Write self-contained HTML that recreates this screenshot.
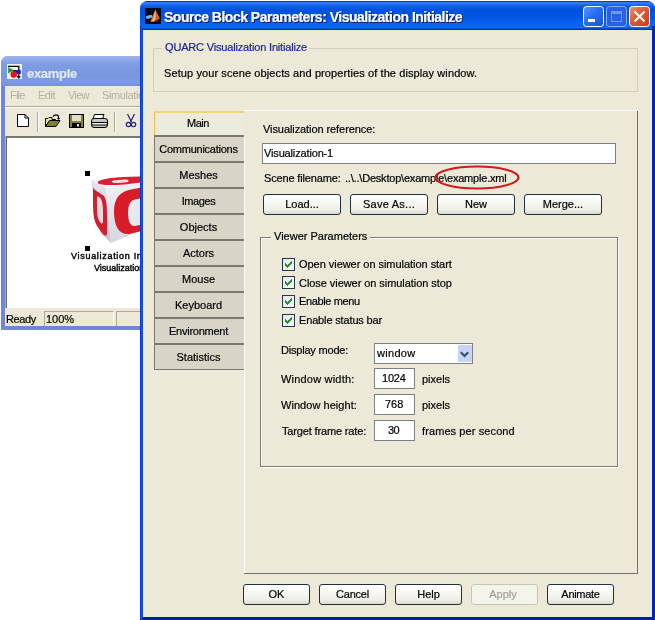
<!DOCTYPE html>
<html><head><meta charset="utf-8">
<style>
html,body{margin:0;padding:0;}
body{will-change:transform;-webkit-text-stroke-width:0.2px;width:655px;height:620px;position:relative;overflow:hidden;background:#fff;font-family:"Liberation Sans",sans-serif;font-size:11px;color:#000;}
.a{position:absolute;}
.t{position:absolute;white-space:pre;line-height:13px;font-size:11px;}
svg{position:absolute;overflow:visible;}
/* background window */
#bgw{left:1px;top:56px;width:150px;height:274px;background:#7286d8;border-radius:7px 7px 0 0;}
#bgtitle{left:1px;top:56px;width:150px;height:30px;border-radius:7px 7px 0 0;background:linear-gradient(#a0b6ee 0px,#92aaea 3px,#809de2 8px,#7896de 20px,#7f9ce2 26px,#7490dc 30px);}
#bgmenu{left:5px;top:86px;width:140px;height:20px;background:#ece9d8;}
#bgsep{left:5px;top:106px;width:140px;height:1px;background:#aca899;}
#bgtool{left:5px;top:107px;width:140px;height:29px;background:#ece9d8;border-top:1px solid #fff;}
#bgcanvas{left:6px;top:136px;width:139px;height:170px;background:#fff;border-left:1px solid #646a64;border-top:2px solid #7a786e;}
#bgstatus{left:5px;top:308px;width:140px;height:18px;background:#ece9d8;}
.menu{color:#b4b1a2;-webkit-text-stroke-width:0;}
/* dialog */
#dlg{left:140px;top:1px;width:515px;height:619px;background:#0a2ab8;border-radius:8px 8px 0 0;}
#dtitle{left:140px;top:1px;width:515px;height:29px;border-radius:8px 8px 0 0;background:linear-gradient(#0a3aa8 0px,#0a3aa8 1px,#3a80f2 1px,#2a74f0 3px,#0c5ce8 5px,#0052dc 9px,#0055e2 16px,#0862f4 22px,#0a68fa 27px,#0038b8 28px,#0030b0 29px);}
#dclient{left:143px;top:30px;width:509px;height:587px;background:#ece9d8;}
.btn{position:absolute;box-sizing:border-box;height:21px;border:1px solid #1f3040;border-radius:3px;background:linear-gradient(#ffffff 0%,#f8f8f5 35%,#eeede6 80%,#dcd8cc 100%);}
.btn span{position:absolute;left:0;right:0;top:3px;text-align:center;line-height:13px;white-space:pre;}
.inp{position:absolute;box-sizing:border-box;border:1px solid #7e817f;background:#fff;}
.tab{position:absolute;left:154px;width:90px;height:26px;box-sizing:border-box;background:#d8d4c8;border-left:1px solid #7b786c;border-top:2px solid #7b786c;}
.tab span{position:absolute;left:0;right:2px;top:6px;text-align:center;line-height:13px;white-space:pre;}
</style></head><body>

<!-- ============ background window ============ -->
<div class="a" id="bgw"></div>
<div class="a" id="bgtitle"></div>
<svg style="left:7px;top:64px" width="16" height="16" viewBox="0 0 16 16">
  <rect x="0" y="0" width="15" height="15" fill="#eef0ea"/>
  <path d="M1 2.3 L11.8 2.3 L11.8 6" fill="none" stroke="#000" stroke-width="1.3"/>
  <path d="M1.2 3.2 L7 6.2 L1.2 9.4 Z" fill="#1a9a2a"/>
  <rect x="5.8" y="6" width="8" height="4" fill="#1c1cc8"/>
  <circle cx="6.8" cy="10.6" r="3.3" fill="#e01818"/>
  <path d="M11.8 10 L11.8 13.8 M10.3 12.3 L11.8 13.8 L13.3 12.3" fill="none" stroke="#000" stroke-width="1.2"/>
</svg>
<div class="t" style="left:27px;top:66px;font-size:13px;line-height:15px;font-weight:bold;color:#dfe8fa;letter-spacing:-0.3px;">example</div>
<div class="a" id="bgmenu"></div>
<div class="t menu" style="left:10px;top:89px;letter-spacing:-0.8px;">File</div>
<div class="t menu" style="left:38px;top:89px;letter-spacing:-0.5px;">Edit</div>
<div class="t menu" style="left:68px;top:89px;letter-spacing:-0.7px;">View</div>
<div class="t menu" style="left:102px;top:89px;letter-spacing:-0.4px;">Simulation</div>
<div class="a" id="bgsep"></div>
<div class="a" id="bgtool"></div>
<!-- toolbar icons -->
<svg style="left:0;top:0" width="145" height="140">
  <!-- new doc -->
  <path d="M17.5 114.5 H25 L28.5 118 V126.5 H17.5 Z" fill="#fff" stroke="#000" stroke-width="1"/>
  <path d="M25 114.5 V118 H28.5" fill="none" stroke="#000" stroke-width="1"/>
  <!-- separator -->
  <rect x="37" y="112" width="1" height="20" fill="#aca899"/><rect x="38" y="112" width="1" height="20" fill="#fff"/>
  <!-- open folder -->
  <path d="M45.5 118.5 H48 L49 117.5 H52 V119.5 H55.5 V121 H50 L45.5 126.5 Z" fill="#e8e890" stroke="#000" stroke-width="1"/>
  <path d="M45.5 126.5 L49.5 120.5 H60 L56 126.5 Z" fill="#808030" stroke="#000" stroke-width="1"/>
  <path d="M53 116.5 Q55.5 113.5 58.5 116 L58.5 119" fill="none" stroke="#000" stroke-width="1.2"/>
  <path d="M57 118 L58.5 120 L60 118 Z" fill="#000"/>
  <!-- floppy -->
  <rect x="69.5" y="114.5" width="14" height="13" fill="#808040" stroke="#000" stroke-width="1"/>
  <rect x="72" y="115" width="9" height="6" fill="#e0e0c8"/>
  <rect x="72" y="123" width="9" height="4.5" fill="#000"/>
  <rect x="77" y="124" width="2" height="2.5" fill="#e0e0c8"/>
  <!-- printer -->
  <path d="M94.5 114.5 H104 L102.5 119 H93 Z" fill="#fff" stroke="#000" stroke-width="1"/>
  <path d="M91.5 121 Q91.5 118.5 94 118.5 H105 Q107.5 118.5 107.5 121 V125 Q107.5 127.5 105 127.5 H94 Q91.5 127.5 91.5 125 Z" fill="#c8c8c0" stroke="#000" stroke-width="1"/>
  <path d="M92 122.5 H107 M92 125 H107" stroke="#000" stroke-width="1"/>
  <path d="M93 123.7 H106" stroke="#fff" stroke-width="1"/>
  <!-- separator -->
  <rect x="114" y="112" width="1" height="20" fill="#aca899"/><rect x="115" y="112" width="1" height="20" fill="#fff"/>
  <!-- scissors -->
  <path d="M127.5 114 L131.5 122 M134.5 114 L130.5 122" stroke="#20207a" stroke-width="1.2" fill="none"/>
  <circle cx="128.5" cy="124.5" r="2.2" fill="none" stroke="#20207a" stroke-width="1.2"/>
  <circle cx="133.5" cy="124.5" r="2.2" fill="none" stroke="#20207a" stroke-width="1.2"/>
</svg>
<div class="a" style="left:5px;top:136px;width:1px;height:172px;background:#a4acd6;"></div><div class="a" id="bgcanvas"></div>
<!-- cube block -->
<svg style="left:0;top:0" width="145" height="300">
  <rect x="85" y="171" width="5" height="5" fill="#000"/>
  <rect x="85" y="246" width="5" height="5" fill="#000"/>
  <!-- faces -->
  <defs><linearGradient id="ff" x1="0" y1="0" x2="0" y2="1"><stop offset="0" stop-color="#f2f2f6"/><stop offset="1" stop-color="#d6d6de"/></linearGradient>
  <linearGradient id="lf" x1="0" y1="0" x2="0" y2="1"><stop offset="0" stop-color="#e4e4ea"/><stop offset="1" stop-color="#c4c4cc"/></linearGradient></defs>
  <polygon points="91,180 106,188 111,243 100,232" fill="url(#lf)"/>
  <polygon points="106,188 142,181 142,230 111,243" fill="url(#ff)"/>
  <polygon points="91,180 142,175 142,181 106,188" fill="#f4f4f8"/>
  <!-- left letter -->
  <path d="M93 188 Q92 186 95 190 L104 196 Q107 200 107 215 L107 234 Q106 238 102 233 L97 226 Q93 220 93 205 Z" fill="#d02030"/>
  <path d="M97 197 Q98 195 101 199 Q103 203 103 212 L103 222 Q102 225 100 222 Q97 218 97 210 Z" fill="#f0d8dc"/>
  <!-- front letter -->
  <path d="M142 187.5 L131 189.5 Q114 192.5 114 211 Q114 235 129 234 L142 231 Z" fill="#d81c28"/>
  <path d="M142 198 L135 199.5 Q128 201 128 212 Q128 226.5 135 226 L142 224.5 Z" fill="#e8e8f0"/>
  <!-- top letter -->
  <path d="M98 181.5 Q103 178 124 177 L141 176.5 L141 182.5 Q120 185.5 106 185 Q96 184.5 98 181.5 Z" fill="#d82030"/>
  <path d="M112 181 Q115 179.5 126 179.5 Q130 180 128 182 Q120 183.3 114 183 Q111 182 112 181 Z" fill="#f4e0e4"/>
</svg>
<div class="t" style="left:71px;top:251px;font-size:9px;line-height:11px;letter-spacing:0.7px;-webkit-text-stroke-width:0.4px;">Visualization Initialize</div>
<div class="t" style="left:94px;top:263px;font-size:9px;line-height:11px;-webkit-text-stroke-width:0.4px;">Visualization</div>
<div class="a" id="bgstatus"></div>
<div class="a" style="left:44px;top:311px;width:70px;height:15px;box-sizing:border-box;border-top:1px solid #aca899;border-left:1px solid #aca899;border-right:1px solid #fff;"></div>
<div class="a" style="left:116px;top:311px;width:40px;height:15px;box-sizing:border-box;border-top:1px solid #aca899;border-left:1px solid #aca899;"></div>
<div class="t" style="left:6px;top:313px;letter-spacing:-0.4px;">Ready</div>
<div class="t" style="left:46px;top:313px;">100%</div>

<!-- ============ dialog ============ -->
<div class="a" id="dlg"></div>
<div class="a" id="dtitle"></div>
<div class="a" style="left:140px;top:26px;width:1px;height:594px;background:#0a36c4;"></div><div class="a" style="left:141px;top:26px;width:1px;height:594px;background:#1e56e6;"></div><div class="a" style="left:142px;top:30px;width:1px;height:587px;background:#0c46d8;"></div><div class="a" style="left:652px;top:26px;width:3px;height:594px;background:#0424b0;"></div><div class="a" style="left:143px;top:617px;width:512px;height:3px;background:#021e98;"></div>
<div class="a" id="dclient"></div>
<!-- matlab icon -->
<svg style="left:145px;top:8px" width="16" height="16" viewBox="0 0 16 16">
  <rect width="16" height="16" fill="#030a1e"/>
  <ellipse cx="4.2" cy="8.8" rx="3.4" ry="1.7" transform="rotate(-12 4.2 8.8)" fill="#78b8e0"/>
  <path d="M5.2 13.8 Q7.5 8.5 10.3 1.2 Q12.5 6 14.8 10.6 Q12.5 12.2 10 13.2 Q7 14.6 5.2 13.8 Z" fill="#d8662a"/>
  <path d="M6.8 13.4 Q9 7.5 10.4 2.2 Q11.4 7 10 12.2 Z" fill="#ffb27a"/>
  <path d="M10.2 12.8 Q12.5 11.2 14.8 10.6 Q13.5 13.6 11 14.2 Z" fill="#7a1a10"/>
</svg>
<div class="t" style="left:165px;top:11px;font-size:14px;line-height:15px;font-weight:bold;color:#0a1a70;letter-spacing:-0.5px;">Source Block Parameters: Visualization Initialize</div>
<div class="t" style="left:164px;top:10px;font-size:14px;line-height:15px;font-weight:bold;color:#fff;letter-spacing:-0.5px;">Source Block Parameters: Visualization Initialize</div>
<!-- title buttons -->
<svg style="left:0;top:0" width="655" height="30">
  <defs>
    <linearGradient id="gb" x1="0" y1="0" x2="1" y2="1"><stop offset="0" stop-color="#5a9cff"/><stop offset="0.45" stop-color="#2a6cf4"/><stop offset="1" stop-color="#1a50d8"/></linearGradient>
    <linearGradient id="gr" x1="0" y1="0" x2="1" y2="1"><stop offset="0" stop-color="#f09070"/><stop offset="0.45" stop-color="#e05a30"/><stop offset="1" stop-color="#c83a18"/></linearGradient>
  </defs>
  <rect x="583.5" y="6.5" width="20" height="20" rx="3" fill="url(#gb)" stroke="#fff" stroke-width="1"/>
  <rect x="588" y="19" width="7" height="3" fill="#fff"/>
  <rect x="606.5" y="6.5" width="20" height="20" rx="3" fill="#2a60e8" stroke="#8aaef4" stroke-width="1"/>
  <rect x="611.5" y="11.5" width="10" height="10" fill="none" stroke="#6e98ee" stroke-width="1"/>
  <rect x="611" y="11" width="11" height="3" fill="#6e98ee"/>
  <rect x="629.5" y="6.5" width="20" height="20" rx="3" fill="url(#gr)" stroke="#fff" stroke-width="1"/>
  <path d="M634.5 11.5 L644.5 21.5 M644.5 11.5 L634.5 21.5" stroke="#fff" stroke-width="2"/>
</svg>

<!-- top group -->
<div class="a" style="left:153px;top:48px;width:483px;height:42px;border:1px solid #d0d0bf;"></div>
<div class="t" style="left:163px;top:41px;padding:0 2px;background:#ece9d8;color:#1c2496;letter-spacing:-0.17px;">QUARC Visualization Initialize</div>
<div class="t" style="left:164px;top:67px;letter-spacing:0.1px;">Setup your scene objects and properties of the display window.</div>

<!-- tabs panel -->
<div class="a" style="left:244px;top:110px;width:394px;height:1px;background:#fff;"></div>
<div class="a" style="left:244px;top:136px;width:1px;height:438px;background:#fff;"></div>
<div class="a" style="left:637px;top:111px;width:1px;height:463px;background:#737064;"></div>
<div class="a" style="left:244px;top:573px;width:394px;height:1px;background:#737064;"></div>
<div class="a" style="left:154px;top:111px;width:90px;height:25px;background:#edeade;border-top:2px solid #f0d47a;border-left:1px solid #e8c860;box-sizing:border-box;"></div><div class="a" style="left:155px;top:113px;width:1px;height:22px;background:#f4e4a8;"></div>
<div class="t" style="left:187px;top:117px;letter-spacing:-0.5px;">Main</div>
<div class="tab" style="top:135px;"><span style="letter-spacing:-0.25px">Communications</span></div>
<div class="tab" style="top:161px;"><span>Meshes</span></div>
<div class="tab" style="top:187px;"><span style="letter-spacing:-0.4px">Images</span></div>
<div class="tab" style="top:213px;"><span>Objects</span></div>
<div class="tab" style="top:239px;"><span>Actors</span></div>
<div class="tab" style="top:265px;"><span>Mouse</span></div>
<div class="tab" style="top:291px;"><span>Keyboard</span></div>
<div class="tab" style="top:317px;"><span style="letter-spacing:-0.25px">Environment</span></div>
<div class="tab" style="top:343px;height:27px;border-bottom:1px solid #7b786c;"><span>Statistics</span></div>

<!-- main content -->
<div class="t" style="left:263px;top:123px;letter-spacing:-0.08px;">Visualization reference:</div>
<div class="inp" style="left:262px;top:143px;width:354px;height:21px;"></div>
<div class="t" style="left:264px;top:147px;letter-spacing:-0.15px;">Visualization-1</div>
<div class="t" style="left:264px;top:172px;letter-spacing:-0.15px;">Scene filename:</div>
<div class="t" style="left:345px;top:172px;letter-spacing:-0.2px;">..\..\Desktop\example\example.xml</div>
<svg style="left:0;top:0" width="655" height="620"><ellipse cx="477" cy="177.5" rx="41.5" ry="11" fill="none" stroke="#d01c1c" stroke-width="2.2"/></svg>

<div class="btn" style="left:263px;top:194px;width:78px;"><span>Load...</span></div>
<div class="btn" style="left:350px;top:194px;width:78px;"><span style="letter-spacing:0.25px">Save As...</span></div>
<div class="btn" style="left:437px;top:194px;width:78px;"><span>New</span></div>
<div class="btn" style="left:524px;top:194px;width:78px;"><span>Merge...</span></div>

<!-- viewer params group -->
<div class="a" style="left:261px;top:238px;width:358px;height:230px;border:1px solid #fff;box-sizing:border-box;"></div>
<div class="a" style="left:260px;top:237px;width:358px;height:230px;border:1px solid #7c7a6c;box-sizing:border-box;"></div>
<div class="a" style="left:261px;top:238px;width:1px;height:228px;background:#fff;"></div>
<div class="a" style="left:261px;top:238px;width:356px;height:1px;background:#fff;"></div>
<div class="t" style="left:271px;top:230px;padding:0 3px;background:#ece9d8;">Viewer Parameters</div>

<svg style="left:0;top:0" width="655" height="620">
  <defs>
    <linearGradient id="cbg" x1="0" y1="0" x2="1" y2="1"><stop offset="0" stop-color="#e2e6de"/><stop offset="1" stop-color="#ffffff"/></linearGradient>
    <g id="cb">
      <rect x="0.5" y="0.5" width="12" height="12" fill="url(#cbg)" stroke="#25394d"/>
      <path d="M9 3h1v1h-1zM8 4h1v1h-1zM9 4h1v1h-1zM3 5h1v1h-1zM7 5h1v1h-1zM8 5h1v1h-1zM9 5h1v1h-1zM3 6h1v1h-1zM4 6h1v1h-1zM6 6h1v1h-1zM7 6h1v1h-1zM8 6h1v1h-1zM3 7h1v1h-1zM4 7h1v1h-1zM5 7h1v1h-1zM6 7h1v1h-1zM7 7h1v1h-1zM4 8h1v1h-1zM5 8h1v1h-1zM6 8h1v1h-1zM5 9h1v1h-1z" fill="#2f8f3a" shape-rendering="crispEdges"/>
    </g>
  </defs>
  <use href="#cb" x="282" y="258"/>
  <use href="#cb" x="282" y="276"/>
  <use href="#cb" x="282" y="295"/>
  <use href="#cb" x="282" y="314"/>
</svg>
<div class="t" style="left:299px;top:258px;letter-spacing:-0.04px;">Open viewer on simulation start</div>
<div class="t" style="left:299px;top:277px;letter-spacing:-0.06px;">Close viewer on simulation stop</div>
<div class="t" style="left:299px;top:295px;letter-spacing:-0.38px;">Enable menu</div>
<div class="t" style="left:299px;top:314px;letter-spacing:-0.15px;">Enable status bar</div>

<div class="t" style="left:281px;top:344px;letter-spacing:-0.2px;">Display mode:</div>
<div class="inp" style="left:374px;top:343px;width:99px;height:21px;"></div>
<div class="t" style="left:377px;top:347px;letter-spacing:0.3px;">window</div>
<svg style="left:458px;top:345px" width="14" height="18">
  <rect x="0" y="0" width="14" height="17" rx="1" fill="#c6d4f6"/>
  <path d="M2.8 7.2 L6.5 10.9 L10.2 7.2" stroke="#3a4a68" stroke-width="2.1" fill="none"/>
</svg>

<div class="t" style="left:281px;top:373px;letter-spacing:0.2px;">Window width:</div>
<div class="inp" style="left:374px;top:368px;width:41px;height:21px;"></div>
<div class="t" style="left:382px;top:372px;letter-spacing:-0.2px;">1024</div>
<div class="t" style="left:422px;top:373px;">pixels</div>

<div class="t" style="left:281px;top:399px;letter-spacing:0.05px;">Window height:</div>
<div class="inp" style="left:374px;top:394px;width:41px;height:21px;"></div>
<div class="t" style="left:385px;top:398px;">768</div>
<div class="t" style="left:422px;top:399px;">pixels</div>

<div class="t" style="left:282px;top:425px;letter-spacing:-0.15px;">Target frame rate:</div>
<div class="inp" style="left:374px;top:420px;width:41px;height:21px;"></div>
<div class="t" style="left:388px;top:424px;letter-spacing:-0.5px;">30</div>
<div class="t" style="left:422px;top:425px;letter-spacing:0.1px;">frames per second</div>

<!-- bottom buttons -->
<div class="btn" style="left:243px;top:584px;width:67px;"><span>OK</span></div>
<div class="btn" style="left:319px;top:584px;width:67px;"><span style="letter-spacing:-0.2px">Cancel</span></div>
<div class="btn" style="left:395px;top:584px;width:67px;"><span>Help</span></div>
<div class="btn" style="left:471px;top:584px;width:67px;border-color:#c9c7ba;background:#f5f4ea;color:#a3a092;"><span style="right:3px">Apply</span></div>
<div class="btn" style="left:547px;top:584px;width:67px;"><span style="letter-spacing:-0.3px">Animate</span></div>

</body></html>
